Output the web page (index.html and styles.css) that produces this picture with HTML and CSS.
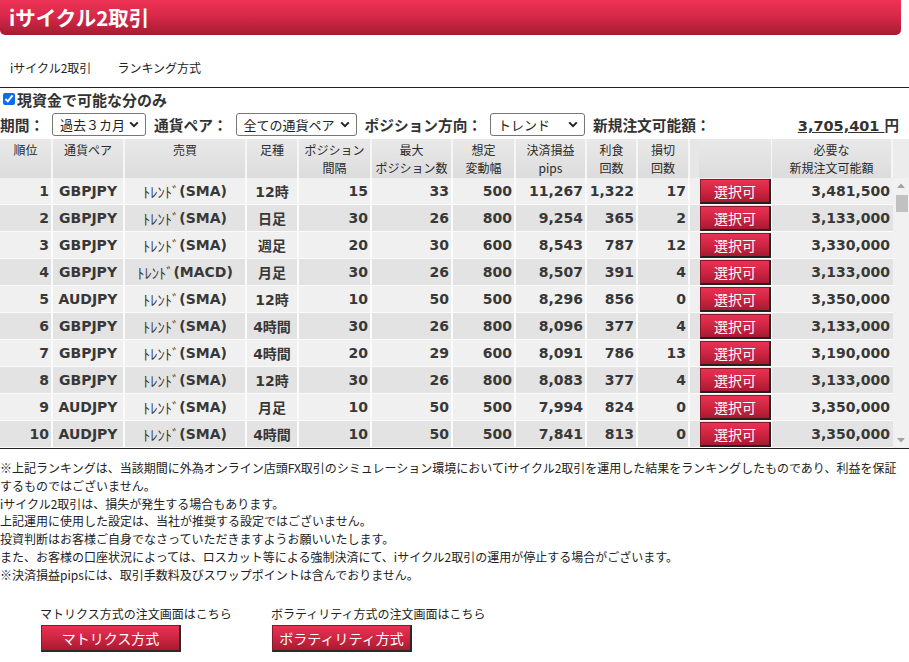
FILE: index.html
```html
<!DOCTYPE html>
<html lang="ja">
<head>
<meta charset="utf-8">
<title>iサイクル2取引 ランキング方式</title>
<link rel="stylesheet" href="styles.css">
</head>
<body>
<header class="titlebar"><h1>iサイクル2取引</h1></header>
<nav class="tabs"><span>iサイクル2取引</span><span>ランキング方式</span></nav>

<label class="check"><input type="checkbox" checked><span>現資金で可能な分のみ</span></label>

<div class="filter-row">
  <span class="flabel">期間：</span>
  <div class="sel w1"><span>過去３カ月</span><svg width="10" height="7" viewBox="0 0 10 7"><path d="M1.2 1.4 L5 5.2 L8.8 1.4" fill="none" stroke="#222" stroke-width="2"/></svg></div>
  <span class="flabel">通貨ペア：</span>
  <div class="sel w2"><span>全ての通貨ペア</span><svg width="10" height="7" viewBox="0 0 10 7"><path d="M1.2 1.4 L5 5.2 L8.8 1.4" fill="none" stroke="#222" stroke-width="2"/></svg></div>
  <span class="flabel">ポジション方向：</span>
  <div class="sel w3"><span>トレンド</span><svg width="10" height="7" viewBox="0 0 10 7"><path d="M1.2 1.4 L5 5.2 L8.8 1.4" fill="none" stroke="#222" stroke-width="2"/></svg></div>
  <span class="flabel">新規注文可能額：</span>
  <span class="amount"><a>3,705,401 </a>円</span>
</div>

<section class="ranking">
  <div class="grid head">
    <div class="hc">順位</div>
    <div class="hc">通貨ペア</div>
    <div class="hc">売買</div>
    <div class="hc">足種</div>
    <div class="hc">ポジション<br>間隔</div>
    <div class="hc">最大<br>ポジション数</div>
    <div class="hc">想定<br>変動幅</div>
    <div class="hc">決済損益<br>pips</div>
    <div class="hc">利食<br>回数</div>
    <div class="hc">損切<br>回数</div>
    <div class="hc hbtn"></div>
    <div class="hc">必要な<br>新規注文可能額</div>
    <div class="hc hsb"></div>
  </div>
  <div class="body-wrap">
    <div class="rows">
      <div class="grid row"><div class="c n">1</div><div class="c t">GBPJPY</div><div class="c t"><span class="kana">ﾄﾚﾝﾄﾞ</span>(SMA)</div><div class="c t">12時</div><div class="c n">15</div><div class="c n">33</div><div class="c n">500</div><div class="c n">11,267</div><div class="c n">1,322</div><div class="c n">17</div><div class="c b"><button>選択可</button></div><div class="c n last">3,481,500</div></div>
      <div class="grid row"><div class="c n">2</div><div class="c t">GBPJPY</div><div class="c t"><span class="kana">ﾄﾚﾝﾄﾞ</span>(SMA)</div><div class="c t">日足</div><div class="c n">30</div><div class="c n">26</div><div class="c n">800</div><div class="c n">9,254</div><div class="c n">365</div><div class="c n">2</div><div class="c b"><button>選択可</button></div><div class="c n last">3,133,000</div></div>
      <div class="grid row"><div class="c n">3</div><div class="c t">GBPJPY</div><div class="c t"><span class="kana">ﾄﾚﾝﾄﾞ</span>(SMA)</div><div class="c t">週足</div><div class="c n">20</div><div class="c n">30</div><div class="c n">600</div><div class="c n">8,543</div><div class="c n">787</div><div class="c n">12</div><div class="c b"><button>選択可</button></div><div class="c n last">3,330,000</div></div>
      <div class="grid row"><div class="c n">4</div><div class="c t">GBPJPY</div><div class="c t"><span class="kana">ﾄﾚﾝﾄﾞ</span>(MACD)</div><div class="c t">月足</div><div class="c n">30</div><div class="c n">26</div><div class="c n">800</div><div class="c n">8,507</div><div class="c n">391</div><div class="c n">4</div><div class="c b"><button>選択可</button></div><div class="c n last">3,133,000</div></div>
      <div class="grid row"><div class="c n">5</div><div class="c t">AUDJPY</div><div class="c t"><span class="kana">ﾄﾚﾝﾄﾞ</span>(SMA)</div><div class="c t">12時</div><div class="c n">10</div><div class="c n">50</div><div class="c n">500</div><div class="c n">8,296</div><div class="c n">856</div><div class="c n">0</div><div class="c b"><button>選択可</button></div><div class="c n last">3,350,000</div></div>
      <div class="grid row"><div class="c n">6</div><div class="c t">GBPJPY</div><div class="c t"><span class="kana">ﾄﾚﾝﾄﾞ</span>(SMA)</div><div class="c t">4時間</div><div class="c n">30</div><div class="c n">26</div><div class="c n">800</div><div class="c n">8,096</div><div class="c n">377</div><div class="c n">4</div><div class="c b"><button>選択可</button></div><div class="c n last">3,133,000</div></div>
      <div class="grid row"><div class="c n">7</div><div class="c t">GBPJPY</div><div class="c t"><span class="kana">ﾄﾚﾝﾄﾞ</span>(SMA)</div><div class="c t">4時間</div><div class="c n">20</div><div class="c n">29</div><div class="c n">600</div><div class="c n">8,091</div><div class="c n">786</div><div class="c n">13</div><div class="c b"><button>選択可</button></div><div class="c n last">3,190,000</div></div>
      <div class="grid row"><div class="c n">8</div><div class="c t">GBPJPY</div><div class="c t"><span class="kana">ﾄﾚﾝﾄﾞ</span>(SMA)</div><div class="c t">12時</div><div class="c n">30</div><div class="c n">26</div><div class="c n">800</div><div class="c n">8,083</div><div class="c n">377</div><div class="c n">4</div><div class="c b"><button>選択可</button></div><div class="c n last">3,133,000</div></div>
      <div class="grid row"><div class="c n">9</div><div class="c t">AUDJPY</div><div class="c t"><span class="kana">ﾄﾚﾝﾄﾞ</span>(SMA)</div><div class="c t">月足</div><div class="c n">10</div><div class="c n">50</div><div class="c n">500</div><div class="c n">7,994</div><div class="c n">824</div><div class="c n">0</div><div class="c b"><button>選択可</button></div><div class="c n last">3,350,000</div></div>
      <div class="grid row"><div class="c n">10</div><div class="c t">AUDJPY</div><div class="c t"><span class="kana">ﾄﾚﾝﾄﾞ</span>(SMA)</div><div class="c t">4時間</div><div class="c n">10</div><div class="c n">50</div><div class="c n">500</div><div class="c n">7,841</div><div class="c n">813</div><div class="c n">0</div><div class="c b"><button>選択可</button></div><div class="c n last">3,350,000</div></div>
    </div>
    <div class="scrollbar">
      <div class="arrow"><svg width="8" height="5" viewBox="0 0 8 5"><path d="M0 5 L4 0.5 L8 5 Z" fill="#a3a3a3"/></svg></div>
      <div class="track"><div class="thumb"></div></div>
      <div class="arrow"><svg width="8" height="5" viewBox="0 0 8 5"><path d="M0 0 L4 4.5 L8 0 Z" fill="#a3a3a3"/></svg></div>
    </div>
  </div>
</section>

<div class="notes">
  <p>※上記ランキングは、当該期間に外為オンライン店頭FX取引のシミュレーション環境においてiサイクル2取引を運用した結果をランキングしたものであり、利益を保証<br>するものではございません。</p>
  <p>iサイクル2取引は、損失が発生する場合もあります。</p>
  <p>上記運用に使用した設定は、当社が推奨する設定ではございません。</p>
  <p>投資判断はお客様ご自身でなさっていただきますようお願いいたします。</p>
  <p>また、お客様の口座状況によっては、ロスカット等による強制決済にて、iサイクル2取引の運用が停止する場合がございます。</p>
  <p>※決済損益pipsには、取引手数料及びスワップポイントは含んでおりません。</p>
</div>

<div class="links">
  <div class="link-block first">
    <div class="link-label">マトリクス方式の注文画面はこちら</div>
    <button class="red-btn">マトリクス方式</button>
  </div>
  <div class="link-block">
    <div class="link-label">ボラティリティ方式の注文画面はこちら</div>
    <button class="red-btn">ボラティリティ方式</button>
  </div>
</div>
</body>
</html>
```

FILE: styles.css
```css
* { box-sizing: border-box; }
html, body { margin: 0; padding: 0; background: #fff; }
body {
  width: 909px;
  font-family: "Noto Sans CJK JP", "Noto Sans", sans-serif;
  font-size: 12px;
  color: #333;
}

/* title bar */
.titlebar {
  width: 901px;
  height: 35px;
  display: flex;
  align-items: center;
  padding-left: 9px;
  border-radius: 0 0 5px 5px;
  background: linear-gradient(to bottom, #ee3355 0%, #d9294a 45%, #a51b33 100%);
}
.titlebar h1 {
  margin: 0;
  color: #fff;
  font-size: 20.5px;
  font-weight: 700;
  line-height: 1;
}

/* tabs */
.tabs {
  display: flex;
  gap: 26px;
  padding: 24px 0 10px 10px;
  line-height: 18px;
  border-bottom: 1px solid #222;
  color: #222;
}

/* checkbox line */
.check {
  display: flex;
  align-items: center;
  height: 22px;
  font-size: 15px;
  font-weight: 700;
  color: #333;
}
.check input {
  width: 12px;
  height: 12px;
  margin: 0 2px 0 3px;
  accent-color: #0a6cf0;
}

/* filters */
.filter-row {
  display: flex;
  align-items: center;
  gap: 8px;
  height: 24px;
  margin-top: 2px;
  padding-right: 10px;
  font-size: 14.7px;
  font-weight: 700;
  color: #333;
}
.sel {
  height: 23px;
  display: flex;
  align-items: center;
  justify-content: space-between;
  padding: 0 6px 0 7px;
  border: 1px solid #767676;
  border-radius: 3px;
  background: #fff;
  font-size: 13px;
  font-weight: 400;
  color: #222;
}
.sel.w1 { width: 94px; }
.sel.w2 { width: 121px; }
.sel.w3 { width: 95px; }
.amount {
  margin-left: auto;
  font-family: "DejaVu Sans", "Noto Sans CJK JP", sans-serif;
  font-size: 14.5px;
  font-weight: 700;
}
.amount a { text-decoration: underline; }

/* ranking table */
.ranking { margin-top: 3px; }
.grid {
  display: grid;
  grid-template-columns: 53px 72px 122px 52px 73px 81px 63px 71px 51px 52px 82px 121px;
}
.grid.head {
  grid-template-columns: 53px 72px 122px 52px 73px 81px 63px 71px 51px 52px 82px 121px 16px;
  height: 39px;
}
.hc {
  background: linear-gradient(to bottom, #e9e9e9, #dcdcdc);
  border-right: 2px solid #f6f6f6;
  text-align: center;
  padding-top: 2px;
  line-height: 18px;
  font-size: 12px;
  color: #2a2a2a;
}
.hc.hbtn { border-left: 9px solid #e6e6e6; border-right: 1px solid #f6f6f6; }
.hc.hsb { border-right: none; background: #ececec; }

.body-wrap {
  display: flex;
  border-bottom: 1px solid #222;
}
.rows { width: 893px; }
.row {
  height: 27px;
  font-family: "DejaVu Sans", "Noto Sans CJK JP", sans-serif;
  font-size: 14px;
  font-weight: 700;
  color: #383838;
}
.row:nth-child(odd) .c { background: #f0f0f0; }
.row:nth-child(even) .c { background: #e3e3e3; }
.c {
  display: flex;
  align-items: center;
  padding: 0 2px;
  border-right: 2px solid #fbfbfb;
  border-bottom: 1px solid #fbfbfb;
  white-space: nowrap;
}
.c.n { justify-content: flex-end; }
.c.t { justify-content: center; }
.c.last { border-right: none; padding-right: 3px; }
.kana { font-family: "Noto Sans CJK JP", sans-serif; font-weight: 400; font-size: 14.5px; }
.c.b {
  padding: 0 0 0 10px;
  align-items: flex-end;
  border-right: 1px solid #fbfbfb;
}
.c.b button {
  width: 71px;
  height: 25px;
  padding: 0;
  border: 1px solid #8e1629;
  border-right: 2px solid #222;
  border-bottom: 2px solid #222;
  background: linear-gradient(to bottom, #e83254 0%, #cf2543 50%, #a81a31 100%);
  color: #fff;
  font-family: "Noto Sans CJK JP", sans-serif;
  font-size: 14px;
  font-weight: 400;
}

/* fake scrollbar */
.scrollbar {
  width: 16px;
  display: flex;
  flex-direction: column;
  background: #f1f1f1;
}
.scrollbar .arrow {
  height: 15px;
  display: flex;
  align-items: center;
  justify-content: center;
}
.scrollbar .track { flex: 1; padding: 2px 1px 0 3px; }
.scrollbar .thumb { height: 17px; background: #c1c1c1; }

/* notes */
.notes {
  margin-top: 10px;
  line-height: 17.8px;
  font-size: 12px;
  color: #222;
}
.notes p { margin: 0; white-space: nowrap; }

/* bottom links */
.links {
  display: flex;
  margin-top: 21px;
  padding-left: 40px;
}
.link-block.first { width: 231px; }
.link-label { line-height: 18px; color: #222; }
.red-btn {
  display: block;
  width: 140px;
  height: 27px;
  margin: 2px 0 0 1px;
  padding: 0;
  border: 1px solid #8e1629;
  border-right: 2px solid #2a2a2a;
  border-bottom: 2px solid #2a2a2a;
  background: linear-gradient(to bottom, #e83254 0%, #cf2543 50%, #a81a31 100%);
  color: #fff;
  font-family: "Noto Sans CJK JP", sans-serif;
  font-size: 14px;
}
```
